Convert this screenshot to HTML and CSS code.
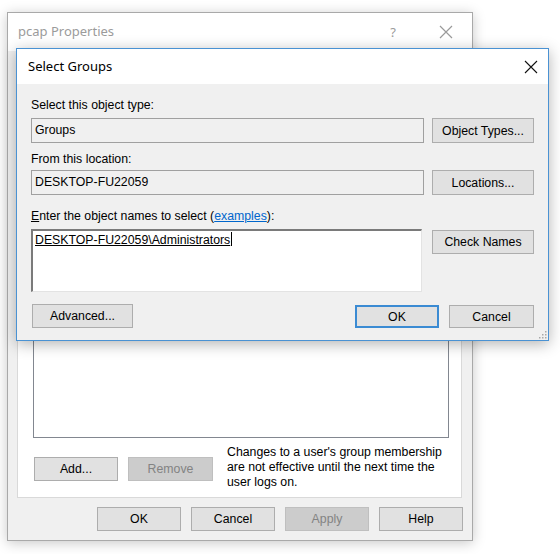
FILE: index.html
```html
<!DOCTYPE html>
<html>
<head>
<meta charset="utf-8">
<link rel="stylesheet" href="styles.css">
</head>
<body>
<div class="props">
  <div class="props-title">
    <span class="props-name">pcap Properties</span>
    <span class="props-help">?</span>
    <span class="props-close">
      <svg width="14" height="14" viewBox="0 0 14 14"><path d="M1 1L13 13M13 1L1 13" stroke="#9a9a9a" stroke-width="1.2" fill="none"/></svg>
    </span>
  </div>
  <div class="props-body">
    <div class="tabpage">
      <div class="listbox"></div>
      <div class="members-row">
        <button class="btn w84">Add...</button>
        <button class="btn w85 disabled">Remove</button>
        <p class="note">Changes to a user's group membership<br>are not effective until the next time the<br>user logs on.</p>
      </div>
    </div>
    <div class="props-footer">
      <button class="btn w84">OK</button>
      <button class="btn w84">Cancel</button>
      <button class="btn w84 disabled">Apply</button>
      <button class="btn w84">Help</button>
    </div>
  </div>
</div>

<div class="dlg">
  <div class="dlg-title">
    <span class="dlg-name">Select Groups</span>
    <span class="dlg-close">
      <svg width="14" height="14" viewBox="0 0 14 14"><path d="M1 1L13 13M13 1L1 13" stroke="#111" stroke-width="1.1" fill="none"/></svg>
    </span>
  </div>
  <div class="dlg-body">
    <div class="lbl l1">Select this object type:</div>
    <div class="row r1">
      <div class="field">Groups</div>
      <button class="btn side">Object Types...</button>
    </div>
    <div class="lbl l2">From this location:</div>
    <div class="row r2">
      <div class="field">DESKTOP-FU22059</div>
      <button class="btn side">Locations...</button>
    </div>
    <div class="lbl l3"><u>E</u>nter the object names to select (<a class="link">examples</a>):</div>
    <div class="row r3">
      <div class="names"><span class="names-text">DESKTOP-FU22059\Administrators</span><span class="caret"></span></div>
      <button class="btn side check">Check Names</button>
    </div>
    <div class="dlg-actions">
      <button class="btn adv">Advanced...</button>
      <span class="spacer"></span>
      <button class="btn w84 default">OK</button>
      <button class="btn w85">Cancel</button>
    </div>
    <svg class="grip" width="10" height="10" viewBox="0 0 10 10">
      <rect x="8" y="2" width="1.5" height="1.5" fill="#a8a8a8"/>
      <rect x="5" y="5" width="1.5" height="1.5" fill="#a8a8a8"/>
      <rect x="8" y="5" width="1.5" height="1.5" fill="#a8a8a8"/>
      <rect x="2" y="8" width="1.5" height="1.5" fill="#a8a8a8"/>
      <rect x="5" y="8" width="1.5" height="1.5" fill="#a8a8a8"/>
      <rect x="8" y="8" width="1.5" height="1.5" fill="#a8a8a8"/>
    </svg>
  </div>
</div>
</body>
</html>
```
FILE: styles.css
```css
html, body {
  margin: 0;
  padding: 0;
  background: #ffffff;
}
body {
  position: relative;
  width: 560px;
  height: 554px;
  overflow: hidden;
  font-family: "Liberation Sans", Arial, sans-serif;
  font-size: 12.3px;
  color: #000;
}
.btn {
  box-sizing: border-box;
  height: 24px;
  margin: 0;
  padding: 0;
  background: #e1e1e1;
  border: 1px solid #adadad;
  font-family: "Liberation Sans", Arial, sans-serif;
  font-size: 12.3px;
  color: #000;
}
.btn.disabled {
  background: #cccccc;
  border-color: #bfbfbf;
  color: #838383;
}
.btn.default {
  border: 2px solid #3b8bd3;
}
.w84 { width: 84px; }
.w85 { width: 85px; }

/* back window */
.props {
  position: absolute;
  left: 7px;
  top: 12px;
  width: 466px;
  height: 529px;
  box-sizing: border-box;
  border: 1px solid #a9a9a9;
  background: #f0f0f0;
  box-shadow: 0 2px 12px rgba(0, 0, 0, 0.22);
  display: flex;
  flex-direction: column;
}
.props-title {
  height: 38px;
  flex: none;
  background: #fff;
  display: flex;
  align-items: center;
  padding-left: 10px;
}
.props-name {
  flex: 1;
  font-family: "Noto Sans", "Open Sans", sans-serif;
  font-size: 13px;
  color: #9b9b9b;
  margin-top: -2px;
}
.props-help {
  width: 54px;
  text-align: center;
  font-family: "Noto Sans", sans-serif;
  font-size: 13px;
  color: #9b9b9b;
}
.props-close {
  width: 52px;
  display: flex;
  justify-content: center;
}
.props-body {
  flex: 1;
  display: flex;
  flex-direction: column;
  padding: 0 9px 0 9px;
}
.tabpage {
  flex: 1;
  margin: 24px 1px 0 0;
  background: #fff;
  border: 1px solid #d9d9d9;
  padding: 30px 12px 7px 15px;
  display: flex;
  flex-direction: column;
}
.listbox {
  flex: 1;
  background: #fff;
  border: 1px solid #828790;
}
.members-row {
  margin-top: 7px;
  display: flex;
  align-items: center;
  height: 45px;
}
.members-row .btn:first-child {
  margin-left: 1px;
  margin-top: 3px;
}
.members-row .disabled {
  margin-left: 10px;
  margin-top: 3px;
}
.note {
  margin: 0 0 0 14px;
  line-height: 15px;
  color: #000;
}
.props-footer {
  height: 42px;
  flex: none;
  box-sizing: border-box;
  padding: 9px 0 0 0;
  display: flex;
  justify-content: flex-end;
  gap: 10px;
}

/* front dialog */
.dlg {
  position: absolute;
  left: 16px;
  top: 48px;
  width: 533px;
  height: 293px;
  box-sizing: border-box;
  border: 1px solid #4a92d3;
  background: #f0f0f0;
  box-shadow: 0 3px 14px rgba(0, 0, 0, 0.3);
  display: flex;
  flex-direction: column;
}
.dlg-title {
  height: 35px;
  flex: none;
  background: #fff;
  display: flex;
  align-items: center;
  padding-left: 11px;
}
.dlg-name {
  flex: 1;
  font-family: "Noto Sans", "Open Sans", sans-serif;
  font-size: 13px;
  color: #000;
  margin-top: -1px;
}
.dlg-close {
  width: 34px;
  display: flex;
  justify-content: center;
}
.dlg-body {
  flex: 1;
  position: relative;
  padding: 14px 14px 0 14px;
}
.lbl {
  line-height: 15px;
  height: 15px;
}
.l2 { margin-top: 9px; }
.l3 { margin-top: 14px; }
.link {
  color: #0066cc;
  text-decoration: underline;
}
.row {
  display: grid;
  grid-template-columns: 393px 102px;
  column-gap: 8px;
  align-items: start;
}
.r1 { margin-top: 5px; }
.r2 { margin-top: 3px; }
.r3 { margin-top: 5px; }
.field {
  box-sizing: border-box;
  height: 25px;
  border: 1px solid #a0a0a0;
  background: #f0f0f0;
  padding: 0 0 0 3px;
  line-height: 23px;
}
.btn.side {
  width: 102px;
  height: 25px;
}
.btn.check {
  margin-top: 1px;
  height: 24px;
}
.names {
  box-sizing: border-box;
  width: 391px;
  height: 63px;
  background: #fff;
  border-top: 2px solid #7a7a7a;
  border-left: 2px solid #7a7a7a;
  border-right: 1px solid #e3e3e3;
  border-bottom: 1px solid #e3e3e3;
  padding: 1px 0 0 2px;
  line-height: 17px;
}
.names-text {
  text-decoration: underline;
}
.caret {
  display: inline-block;
  width: 1px;
  height: 14px;
  background: #000;
  vertical-align: -2px;
  margin-left: 1px;
}
.dlg-actions {
  margin-top: 12px;
  display: flex;
  align-items: center;
  gap: 10px;
}
.btn.adv {
  width: 101px;
  margin-left: 1px;
}
.dlg-actions .default,
.dlg-actions .w85 {
  height: 23px;
  margin-top: 1px;
}
.spacer { flex: 1; }
.grip {
  position: absolute;
  right: 1px;
  bottom: 1px;
}
```
